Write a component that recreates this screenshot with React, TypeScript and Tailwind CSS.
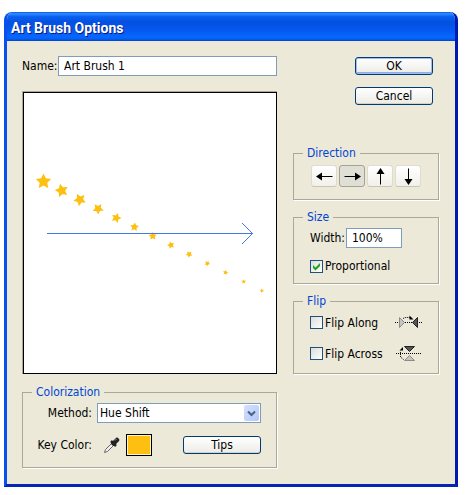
import React, { useId, useState } from 'react';

const stars = [
  { r: 8, rotate: 0 },
  { r: 7, rotate: -14 },
  { r: 6.6, rotate: -28 },
  { r: 5.8, rotate: -38 },
  { r: 5.2, rotate: -52 },
  { r: 4.6, rotate: -66 },
  { r: 4.2, rotate: -74 },
  { r: 3.9, rotate: -88 },
  { r: 3.5, rotate: -102 },
  { r: 3, rotate: -116 },
  { r: 2.7, rotate: -130 },
  { r: 2.4, rotate: -144 },
  { r: 2.2, rotate: -158 },
];

function starPoints(r: number) {
  return Array.from({ length: 10 }, (_, i) => {
    const radius = i % 2 === 0 ? r : r * 0.5;
    const angle = (Math.PI / 5) * i - Math.PI / 2;
    return `${(radius * Math.cos(angle)).toFixed(2)},${(radius * Math.sin(angle)).toFixed(2)}`;
  }).join(' ');
}

function BrushPreview() {
  return (
    <div className="mt-[15px] border-t border-l border-[#aca899]">
      <svg viewBox="0 0 252 280" className="box-content block w-[calc(100%-2px)] border border-black bg-white">
        {stars.map((star, i) => (
          <polygon
            key={i}
            points={starPoints(star.r)}
            fill="#fdc010"
            transform={`translate(${19.5 + i * 18.2} ${88.5 + i * 9.1}) rotate(${star.rotate})`}
          />
        ))}
        <g fill="none" stroke="#4477ee">
          <path d="M23 140.5H229" />
          <path d="M218 130L228.5 140.5L218 151" />
        </g>
      </svg>
    </div>
  );
}

function Group({
  title,
  className,
  bodyClassName,
  children,
}: {
  title: string;
  className: string;
  bodyClassName: string;
  children: React.ReactNode;
}) {
  return (
    <fieldset className={`min-w-0 border border-[#a9a899] shadow-[1px_1px_0_#fff] ${className}`}>
      <legend className="ml-[9px] px-1 leading-[14px] text-[#0046d5]">{title}</legend>
      <div className={bodyClassName}>{children}</div>
    </fieldset>
  );
}

function PushButton({ children, primary = false }: { children: React.ReactNode; primary?: boolean }) {
  return (
    <button
      type="button"
      className={`h-[18px] w-[78px] rounded-[3px] border border-[#003c74] bg-linear-to-b from-white to-[#ecebe5] leading-4 ${
        primary ? 'shadow-[inset_0_0_0_1px_#a3bdf0,inset_0_-2px_0_#8faee8]' : 'shadow-[inset_0_-1px_0_#d6d0c5]'
      }`}
    >
      {children}
    </button>
  );
}

const directions = [
  { name: 'Left', rotate: 180 },
  { name: 'Right', rotate: 0 },
  { name: 'Up', rotate: -90 },
  { name: 'Down', rotate: 90 },
];

function DirectionButtons() {
  const [active, setActive] = useState('Right');

  return (
    <div className="flex gap-0.5">
      {directions.map((d) => (
        <button
          key={d.name}
          type="button"
          aria-label={d.name}
          aria-pressed={active === d.name}
          onClick={() => setActive(d.name)}
          className={`flex h-[22px] w-[26px] items-center justify-center rounded-[3px] border ${
            active === d.name
              ? 'border-[#a3a297] bg-[#e0dfd6]'
              : 'border-[#e0dccd] border-b-[#c9c5b5] bg-linear-to-b from-white to-[#f1f0ea]'
          }`}
        >
          <svg width="17" height="17" viewBox="0 0 17 17">
            <g transform={`rotate(${d.rotate} 8.5 8.5)`}>
              <path d="M0.5 8.5H13" stroke="#000" />
              <path d="M11 4.5L17 8.5L11 12.5Z" />
            </g>
          </svg>
        </button>
      ))}
    </div>
  );
}

function CheckBox({ label, defaultChecked = false }: { label: string; defaultChecked?: boolean }) {
  const id = useId();

  return (
    <div className="flex items-center gap-0.5">
      <span className="relative h-[13px] w-[13px]">
        <input
          id={id}
          type="checkbox"
          defaultChecked={defaultChecked}
          className="peer block h-[13px] w-[13px] appearance-none border border-[#1c5180] bg-linear-to-br from-[#dcdcd7] to-white"
        />
        <svg
          viewBox="0 0 13 13"
          className="pointer-events-none absolute inset-0 hidden h-[13px] w-[13px] peer-checked:block"
        >
          <path d="M3 5V8L5.5 10.5L10 6V3L5.5 7.5Z" fill="#21a121" />
        </svg>
      </span>
      <label htmlFor={id} className="leading-4">
        {label}
      </label>
    </div>
  );
}

function FlipAlongIcon() {
  return (
    <svg width="27" height="17" viewBox="0 0 27 17">
      <path d="M0 8.5H27" stroke="#000" strokeDasharray="1 1" />
      <path d="M4.5 3.5L9.5 8.5L4.5 13.5Z" fill="#c4c4c0" stroke="#8a8a88" />
      <path d="M22.5 3.5L17.5 8.5L22.5 13.5Z" fill="#555" stroke="#222" />
      <path d="M8 4.5L10 3.5H15" fill="none" stroke="#000" strokeDasharray="1 1" />
      <path d="M14.5 1.5L18.5 5.5H14.5Z" />
    </svg>
  );
}

function FlipAcrossIcon() {
  return (
    <svg width="27" height="17" viewBox="0 0 27 17">
      <path d="M1 8.5H27" stroke="#000" strokeDasharray="1 1" />
      <path d="M9.5 1.5H19.5L14.5 6.5Z" fill="#555" stroke="#222" />
      <path d="M9.5 15.5H19.5L14.5 10.5Z" fill="#c4c4c0" stroke="#8a8a88" />
      <path d="M8.5 14.5L5.5 12V6" fill="none" stroke="#000" strokeDasharray="1 1" />
      <path d="M4.5 5.5L8 2V5.5Z" />
    </svg>
  );
}

function Eyedropper() {
  return (
    <svg width="17" height="17" viewBox="0 0 17 17">
      <path d="M1.5 15.5L2.5 12.5L9 6L11 8L4.5 14.5Z" fill="#eee" stroke="#666" />
      <path d="M8 4L13 9" stroke="#222" strokeWidth="2.5" />
      <path d="M10.5 6.5L14 3" stroke="#222" strokeWidth="4.5" strokeLinecap="round" />
      <path d="M12 3.5L13.5 2" stroke="#999" />
    </svg>
  );
}

export default function App() {
  return (
    <div className="bg-white pt-3 pr-[9px] pb-2 pl-1 font-['DejaVu_Sans_Condensed','Open_Sans',sans-serif] text-[12px] text-black">
      <div
        role="dialog"
        aria-labelledby="dialog-title"
        className="overflow-hidden rounded-t-lg border-x-[3px] border-b-[3px] border-l-[#0a50ee] border-r-[#0019b0] border-b-[#0623b8] bg-[#ece9d8]"
      >
        {/* Title bar */}
        <header className="-mx-[3px] flex h-[29px] items-center bg-[linear-gradient(#0a56e8_0%,#2f8dff_6%,#0a5ff0_16%,#0450e0_35%,#0559f0_65%,#0668ff_85%,#0560f5_93%,#0042c8_100%)] pt-1 pl-[7px]">
          <h1
            id="dialog-title"
            className="font-[Roboto,sans-serif] text-[14px] font-bold text-white [text-shadow:1px_1px_0_#0a1883]"
          >
            Art Brush Options
          </h1>
        </header>

        <div className="flex gap-4 pt-[15px] pr-4 pb-4 pl-[15px]">
          <div className="min-w-0 flex-1">
            <div className="flex items-center">
              <label htmlFor="brush-name" className="w-9 shrink-0">
                Name:
              </label>
              <input
                id="brush-name"
                defaultValue="Art Brush 1"
                className="h-5 min-w-0 flex-1 border border-[#7f9db9] bg-white px-[5px]"
              />
            </div>

            <BrushPreview />

            {/* Colorization */}
            <Group title="Colorization" className="mt-[11px]" bodyClassName="pt-1 pr-[15px] pb-[11px]">
              <div className="flex items-center gap-[5px]">
                <label htmlFor="method" className="w-[69px] text-right">
                  Method:
                </label>
                <div className="relative flex-1">
                  <select
                    id="method"
                    className="block h-5 w-full appearance-none border border-[#7f9db9] bg-white pl-0.5"
                  >
                    <option>Hue Shift</option>
                    <option>None</option>
                    <option>Tints</option>
                    <option>Tints and Shades</option>
                  </select>
                  <span className="pointer-events-none absolute top-0.5 right-0.5 flex h-4 w-[15px] items-center justify-center rounded-[2px] bg-linear-to-br from-[#d5e0fe] to-[#b3c8f8]">
                    <svg width="9" height="7" viewBox="0 0 9 7">
                      <path d="M1 1.5L4.5 5L8 1.5" fill="none" stroke="#4d6185" strokeWidth="2" />
                    </svg>
                  </span>
                </div>
              </div>

              <div className="mt-[11px] flex items-center">
                <span className="w-[69px] text-right">Key Color:</span>
                <button type="button" aria-label="Pick key color" className="ml-[11px]">
                  <Eyedropper />
                </button>
                <button
                  type="button"
                  aria-label="Key color"
                  className="ml-1.5 h-[22px] w-[26px] border border-black bg-[#fdc010] shadow-[inset_0_0_0_1px_#fff3c8]"
                />
                <div className="ml-auto flex">
                  <PushButton>Tips</PushButton>
                </div>
              </div>
            </Group>
          </div>

          <div className="w-[146px] shrink-0 pt-px">
            <div className="flex flex-col items-end gap-3 pr-1.5">
              <PushButton primary>OK</PushButton>
              <PushButton>Cancel</PushButton>
            </div>

            <Group title="Direction" className="mt-[41px]" bodyClassName="pt-[5px] pb-3 pl-[17px]">
              <DirectionButtons />
            </Group>

            <Group title="Size" className="mt-2.5" bodyClassName="pt-1 pr-9 pb-[9px] pl-4">
              <div className="flex items-center justify-between">
                <label htmlFor="width">Width:</label>
                <input
                  id="width"
                  defaultValue="100%"
                  className="h-5 w-14 shrink-0 border border-[#7f9db9] bg-white px-[5px]"
                />
              </div>
              <div className="mt-2.5">
                <CheckBox label="Proportional" defaultChecked />
              </div>
            </Group>

            <Group title="Flip" className="mt-2.5" bodyClassName="pt-1.5 pr-4 pb-[11px] pl-4">
              <div className="flex items-center justify-between">
                <CheckBox label="Flip Along" />
                <FlipAlongIcon />
              </div>
              <div className="mt-[14px] flex items-center justify-between">
                <CheckBox label="Flip Across" />
                <FlipAcrossIcon />
              </div>
            </Group>
          </div>
        </div>
      </div>
    </div>
  );
}
